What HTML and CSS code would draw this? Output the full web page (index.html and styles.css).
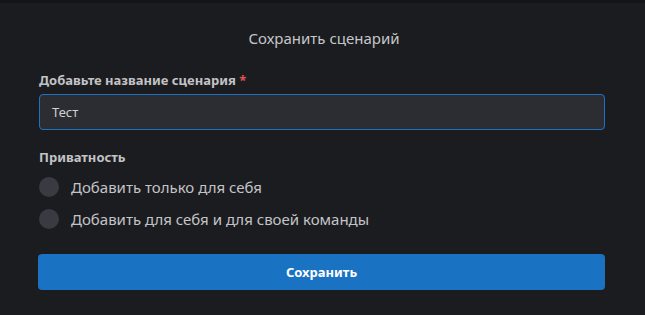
FILE: index.html
```html
<!DOCTYPE html>
<html lang="ru">
<head>
<meta charset="utf-8">
<link rel="stylesheet" href="styles.css">
</head>
<body>
<div class="topband"></div>
<div class="dialog">
  <h1 class="title">Сохранить сценарий</h1>
  <label class="label">Добавьте название сценария <span class="req">*</span></label>
  <div class="input">Тест</div>
  <div class="label privacy">Приватность</div>
  <div class="radios">
    <div class="radio"><span class="dot"></span><span>Добавить только для себя</span></div>
    <div class="radio"><span class="dot"></span><span>Добавить для себя и для своей команды</span></div>
  </div>
  <button class="btn">Сохранить</button>
</div>
</body>
</html>
```
FILE: styles.css
```css
* { box-sizing: border-box; }
html, body { margin: 0; padding: 0; }
body {
  background: #1b1c20;
  font-family: "Noto Sans", "Open Sans", sans-serif;
  color: #c9c9cc;
  width: 645px;
  height: 315px;
  overflow: hidden;
}
.topband { height: 3px; background: #141518; }
.dialog {
  padding: 24px 40px 0 39px;
  display: flex;
  flex-direction: column;
}
.title {
  margin: 0;
  text-align: center;
  font-weight: 400;
  font-size: 15px;
  line-height: 22px;
  color: #c6c6c9;
  padding-left: 4px;
}
.label {
  margin-top: 22px;
  font-weight: 700;
  font-size: 13px;
  line-height: 18px;
  color: #c3c3c6;
}
.req { color: #e05252; }
.input {
  margin-top: 5px;
  height: 36px;
  border: 1px solid #1d72c6;
  border-radius: 4px;
  background: #2c2d33;
  padding: 0 12px;
  display: flex;
  align-items: center;
  font-size: 13px;
  color: #d0d0d3;
}
.privacy { margin-top: 18px; }
.radios {
  margin-top: 11px;
  display: flex;
  flex-direction: column;
  gap: 12px;
}
.radio {
  display: flex;
  align-items: center;
  gap: 12px;
  font-size: 15px;
  line-height: 20px;
  color: #c4c4c7;
}
.dot {
  width: 20px;
  height: 20px;
  border-radius: 50%;
  background: #3a3b42;
  flex: none;
}
.btn {
  margin-top: 25px;
  margin-left: -1px;
  height: 36px;
  border: none;
  border-radius: 4px;
  background: #1a72c3;
  color: #ffffff;
  font-family: "Noto Sans", "Open Sans", sans-serif;
  font-weight: 700;
  font-size: 13px;
}
```
